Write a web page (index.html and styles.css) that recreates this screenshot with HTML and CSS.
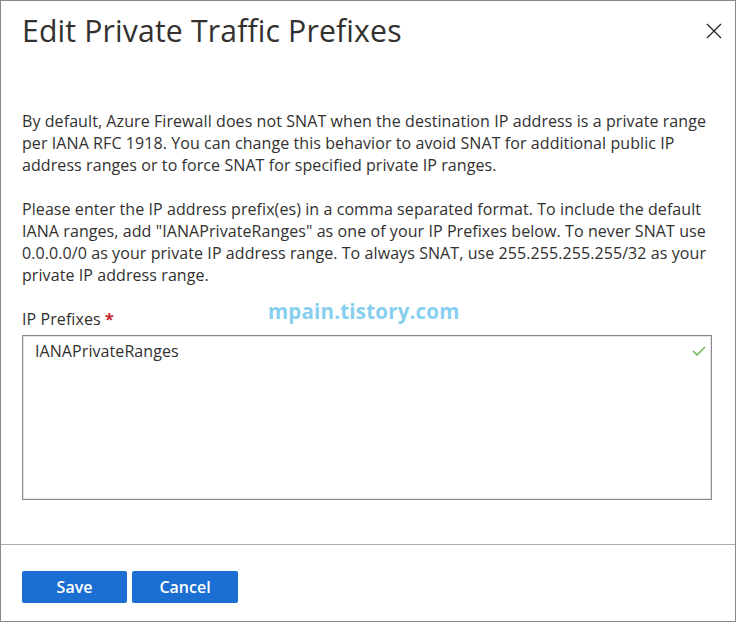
FILE: index.html
```html
<!DOCTYPE html>
<html lang="en">
<head>
<meta charset="utf-8">
<title>Edit Private Traffic Prefixes</title>
<link rel="stylesheet" href="styles.css">
</head>
<body>
<div class="dialog">
  <div class="header">
    <h1 class="title">Edit Private Traffic Prefixes</h1>
    <button class="close" aria-label="Close">
      <svg width="16" height="16" viewBox="0 0 16 16"><path d="M1 1 L15 15 M15 1 L1 15" stroke="#222" stroke-width="1.2" fill="none"/></svg>
    </button>
  </div>
  <div class="content">
    <p class="para">By default, Azure Firewall does not SNAT when the destination IP address is a private range<br>per IANA RFC 1918. You can change this behavior to avoid SNAT for additional public IP<br>address ranges or to force SNAT for specified private IP ranges.</p>
    <p class="para">Please enter the IP address prefix(es) in a comma separated format. To include the default<br>IANA ranges, add "IANAPrivateRanges" as one of your IP Prefixes below. To never SNAT use<br>0.0.0.0/0 as your private IP address range. To always SNAT, use 255.255.255.255/32 as your<br>private IP address range.</p>
    <div class="field">
      <label class="label">IP Prefixes <span class="req">*</span></label>
      <span class="watermark">mpain.tistory.com</span>
      <div class="textarea">
        <span class="value">IANAPrivateRanges</span>
        <svg class="check" width="14" height="10" viewBox="0 0 14 10"><path d="M1 5 L5 9 L13 1" stroke="#5db34a" stroke-width="1.3" fill="none"/></svg>
      </div>
    </div>
  </div>
  <div class="footer">
    <button class="btn">Save</button>
    <button class="btn btn-wide">Cancel</button>
  </div>
</div>
</body>
</html>
```

FILE: styles.css
```css
html, body {
  margin: 0;
  padding: 0;
  background: #fff;
}
body {
  font-family: "Open Sans", "Noto Sans", "Liberation Sans", sans-serif;
  color: #323130;
}
.dialog {
  box-sizing: border-box;
  width: 736px;
  height: 622px;
  border: 1px solid #8a8a8a;
  display: flex;
  flex-direction: column;
}
.header {
  display: flex;
  justify-content: space-between;
  align-items: flex-start;
  padding: 12px 13px 0 21px;
}
.title {
  margin: 0;
  font-size: 30.2px;
  font-weight: 400;
  line-height: 36px;
  letter-spacing: 0.15px;
  color: #323130;
}
.close {
  border: 0;
  background: transparent;
  padding: 0;
  margin-top: 10px;
  width: 16px;
  height: 16px;
  cursor: pointer;
}
.close svg { display: block; }
.content {
  padding: 61px 23px 0 21px;
  flex: 1;
}
.para {
  margin: 0 0 22px 0;
  font-size: 16px;
  line-height: 22px;
  white-space: nowrap;
  letter-spacing: 0.08px;
}
.field {
  position: relative;
  margin-top: 19px;
}
.label {
  display: block;
  font-size: 16px;
  line-height: 22px;
  letter-spacing: 0.08px;
}
.req {
  color: #c4262e;
  font-weight: 700;
}
.watermark {
  position: absolute;
  left: 246px;
  top: -11px;
  font-size: 20.5px;
  font-weight: 700;
  color: #86cff0;
  letter-spacing: 0.2px;
}
.textarea {
  position: relative;
  margin-top: 5px;
  box-sizing: border-box;
  height: 165px;
  border: 1px solid #8a8a8a;
  box-shadow: inset 0 0 0 1px #e4e4e4;
  padding: 4px 12px;
}
.value {
  font-size: 16px;
  line-height: 22px;
  letter-spacing: 0.08px;
}
.check {
  position: absolute;
  right: 5px;
  top: 10px;
}
.footer {
  border-top: 1px solid #ababab;
  height: 77px;
  box-sizing: border-box;
  padding: 26px 21px 0 21px;
  display: flex;
  gap: 5px;
  align-items: flex-start;
}
.btn {
  height: 32px;
  border: 0;
  border-radius: 2px;
  background: #1b6ed2;
  color: #fff;
  font-family: "Open Sans", "Noto Sans", sans-serif;
  font-size: 16px;
  font-weight: 600;
  padding: 0;
  width: 105px;
}
.btn-wide {
  width: 106px;
}
```
